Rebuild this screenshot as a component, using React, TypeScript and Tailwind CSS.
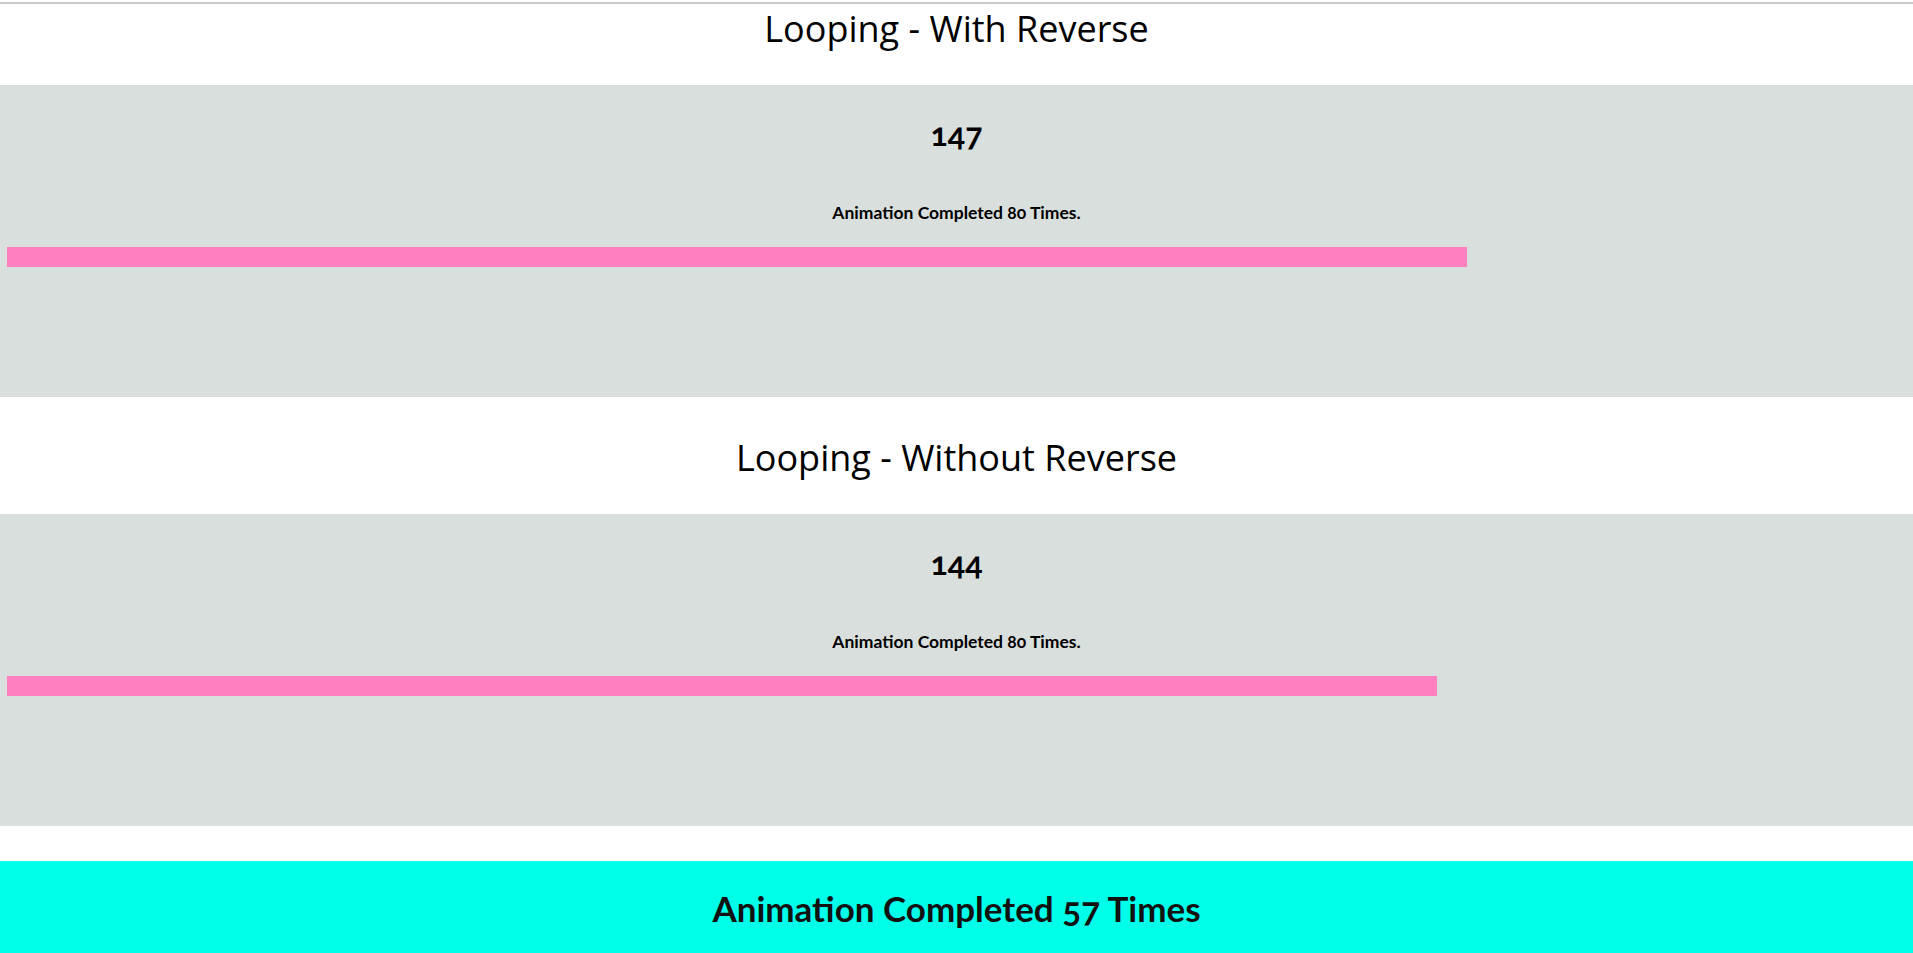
import React from 'react';

/* ---------------- LoopPanel ---------------- */
interface LoopPanelProps {
  value: number;
  completed: number;
  barWidth: number;
}

const LoopPanel = ({ value, completed, barWidth }: LoopPanelProps) => (
  <div className="h-[312px] w-full bg-[#d9dfdd] pt-[33px] font-['Lato',sans-serif] text-black">
    <div className="text-center text-[32px] font-bold leading-[32px] oldstyle-nums">{value}</div>
    <p className="mt-[55px] text-center text-[17.5px] font-bold leading-[16px] oldstyle-nums">
      Animation Completed {completed} Times.
    </p>
    <div className="ml-[7px] mt-[26px] h-[20px] bg-[#ff80c1]" style={{ width: barWidth }} />
  </div>
);

const sections = [
  { title: 'Looping - With Reverse', value: 147, completed: 80, barWidth: 1460 },
  { title: 'Looping - Without Reverse', value: 144, completed: 80, barWidth: 1430 },
];

export default function App() {
  return (
    <div className="min-h-screen w-full bg-white">
      <div className="mt-[2px] h-[2px] bg-[#c9c9c9]" />

      {sections.map((s, i) => (
        <section key={s.title}>
          <h1
            className={`text-center font-['Open_Sans',sans-serif] text-[36px] font-normal leading-[36px] text-black ${
              i === 0 ? 'h-[81px] pt-[7px]' : 'h-[117px] pt-[43px]'
            }`}
          >
            {s.title}
          </h1>
          <LoopPanel value={s.value} completed={s.completed} barWidth={s.barWidth} />
        </section>
      ))}

      <div className="mt-[35px] h-[92px] bg-[#00ffe8] pt-[30px] text-center font-['Lato',sans-serif] text-[35px] font-bold leading-[34px] text-[#111] oldstyle-nums">
        Animation Completed 57 Times
      </div>
    </div>
  );
}
